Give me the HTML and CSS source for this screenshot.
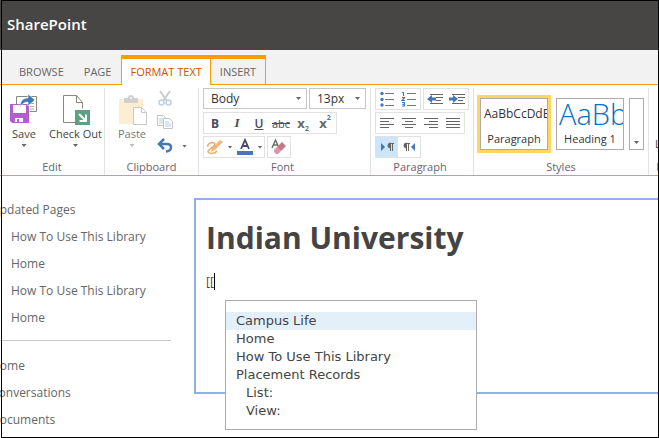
FILE: index.html
```html
<!DOCTYPE html>
<html lang="en">
<head>
<meta charset="utf-8">
<title>SharePoint</title>
<link rel="stylesheet" href="styles.css">
</head>
<body>
<div class="page">
  <header class="suite">SharePoint</header>
  <nav class="tabs">
    <a class="tab" href="#browse">BROWSE</a>
    <a class="tab" href="#page">PAGE</a>
    <a class="tab active" href="#format">FORMAT TEXT</a>
    <a class="tab related" href="#insert">INSERT</a>
  </nav>
  <div class="ribbon">
    <section class="group edit">
      <div class="tools">
        <button class="big">
          <svg width="30" height="32" viewBox="0 0 30 32"><path d="M7.500 12V2.500h20v15h-7" fill="#fff" stroke="#8a887c"/><path d="M21 9.500h4M21 12.500h4M21 15h4" stroke="#aaa"/><path d="M1 10h19v19H3l-2-2z" fill="#b25fcd"/><path d="M4 11h13v8H4z" fill="#fff"/><path d="M6 24h8v4H6z" fill="#fff"/><path d="M8 25h2v3H8z" fill="#b25fcd"/><path d="M11 13c0-7 4-9 8-9V0l7 6-7 6V8c-4 0-6 2-8 5z" fill="#3f78b8" stroke="#fff" stroke-width=".6"/></svg>
          <span>Save</span><i class="arrow"></i>
        </button>
        <button class="big">
          <svg width="30" height="32" viewBox="0 0 30 32"><path d="M15 28.500H3.500v-27h13l6 7v6" fill="#fff" stroke="#8a887c"/><path d="M16.500 1.500v7h6" fill="none" stroke="#8a887c"/><path d="M15 16h15v15H15z" fill="#5f9f84"/><path d="M19 20l7 7M26 20.500V27h-6.500" fill="none" stroke="#fff" stroke-width="2"/></svg>
          <span>Check Out</span><i class="arrow"></i>
        </button>
      </div>
      <h2>Edit</h2>
    </section>
    <section class="group clipboard">
      <div class="tools">
        <button class="big faded" disabled>
          <svg width="30" height="32" viewBox="0 0 30 32"><path d="M2 5h24v25H2z" fill="#fbeed3"/><path d="M7 4h4a3 3 0 0 1 6 0h4v5H7z" fill="#d0d0d0"/><circle cx="14" cy="4" r="1" fill="#fff"/><path d="M16.500 13.500h8l5 5v12h-13z" fill="#fff" stroke="#c8c8c8"/><path d="M24.500 13.500v5h5" fill="none" stroke="#c8c8c8"/></svg>
          <span>Paste</span><i class="arrow"></i>
        </button>
        <div class="stack">
          <button aria-label="Cut"><svg width="16" height="16" viewBox="0 0 16 16"><path d="M3 1l7 10M13 1L6 11" stroke="#ccc" stroke-width="2"/><g fill="none" stroke="#bcd0e4" stroke-width="1.500"><circle cx="4.500" cy="12.500" r="2.500"/><circle cx="11.500" cy="12.500" r="2.500"/></g></svg></button>
          <button aria-label="Copy"><svg width="16" height="16" viewBox="0 0 16 16"><g fill="#fff" stroke="#c4c4c4"><path d="M.5 1.500h6l2 2v8h-8z"/><path d="M6.500 4.500h6l3 3v7h-9z"/></g><path d="M2 5h4M2 7h4M2 9h4M8 8h4M8 10h6M8 12h6" stroke="#b9cde2"/></svg></button>
          <span class="undo"><button aria-label="Undo"><svg width="16" height="16" viewBox="0 0 16 16"><path d="M7 1L2 6l5 5" fill="none" stroke="#4478b8" stroke-width="2.500"/><path d="M2 6h8c6 0 5 7-1 7.500" fill="none" stroke="#4478b8" stroke-width="2.500"/></svg></button><button aria-label="Undo list"><i class="arrow"></i></button></span>
        </div>
      </div>
      <h2>Clipboard</h2>
    </section>
    <section class="group font">
      <div class="tools rows">
        <div class="row">
          <span class="combo wide"><select aria-label="Font"><option>Body</option></select><i class="arrow"></i></span>
          <span class="combo"><select aria-label="Font size"><option>13px</option></select><i class="arrow"></i></span>
        </div>
        <div class="row"><div class="box">
          <button class="b">B</button><button class="it">I</button><button class="u">U</button><button class="s">abc</button><button class="b x">x<sub>2</sub></button><button class="b x">x<sup>2</sup></button>
        </div></div>
        <div class="row">
          <div class="box">
            <button class="split" aria-label="Highlight colour"><svg width="18" height="18" viewBox="0 0 18 18"><path d="M2 9c-2-4 7-6 7-3S1 12 2 14s7 2 9-1" fill="none" stroke="#eda961" stroke-width="1.500"/><path d="M5 14l1-4 8-8 3 2-8 8z" fill="#edb97d"/></svg><i class="arrow"></i></button>
            <button class="split" aria-label="Font colour"><svg width="18" height="18" viewBox="0 0 18 18"><path d="M5 11l4-9 4 9M6.500 8h5" fill="none" stroke="#444b63" stroke-width="1.800"/><path d="M1 13h16v4H1z" fill="#4478b8"/></svg><i class="arrow"></i></button>
          </div>
          <div class="box"><button aria-label="Clear format"><svg width="18" height="18" viewBox="0 0 18 18"><path d="M2 10l3.500-8L9 10M3.500 7h4.500" fill="none" stroke="#6a7068" stroke-width="1.500"/><path d="M4 12l3-3 4 4-3 3H6l-2-2z" fill="#d998a8"/><path d="M7 9l5-5 4 4-5 5z" fill="#c97587"/></svg></button></div>
        </div>
      </div>
      <h2>Font</h2>
    </section>
    <section class="group para">
      <div class="tools rows">
        <div class="row">
          <div class="box">
            <button aria-label="Bullets"><svg width="16" height="16" viewBox="0 0 16 16"><g fill="#4478b8"><circle cx="3" cy="2.500" r="1.700"/><circle cx="3" cy="8.500" r="1.700"/><circle cx="3" cy="14" r="1.700"/></g><path d="M6 2.500h9M6 8.500h9M6 14.500h9" stroke="#777"/></svg></button>
            <button aria-label="Numbering"><svg width="16" height="16" viewBox="0 0 16 16"><path d="M1 1.500h1.500V5M1 6.500h2.500L1 9.500h3M1 11.500h2.500v3.500H1M1.500 13.300h2" fill="none" stroke="#4478b8" stroke-width="1.200"/><path d="M6 2.500h9M6 8.500h9M6 14.500h9" stroke="#777"/></svg></button>
          </div>
          <div class="box">
            <button aria-label="Outdent"><svg width="16" height="16" viewBox="0 0 16 16"><path d="M3 3.500h13M9 6.500h7M9 9.500h5M3 12.500h13" stroke="#666"/><path d="M0 8l5-4v2.500h4v3H5V12z" fill="#4478b8"/></svg></button>
            <button aria-label="Indent"><svg width="16" height="16" viewBox="0 0 16 16"><path d="M3 3.500h13M9 6.500h7M9 9.500h5M3 12.500h13" stroke="#666"/><path d="M9 8L4 4v2.500H0v3h4V12z" fill="#4478b8"/></svg></button>
          </div>
        </div>
        <div class="row"><div class="box">
          <button aria-label="Align left"><svg width="14" height="16" viewBox="0 0 14 16"><path d="M0 3.500h14M0 6.500h9M0 9.500h14M0 12.500h9" stroke="#666"/></svg></button>
          <button aria-label="Centre"><svg width="14" height="16" viewBox="0 0 14 16"><path d="M0 3.500h14M3 6.500h8M0 9.500h14M3 12.500h8" stroke="#666"/></svg></button>
          <button aria-label="Align right"><svg width="14" height="16" viewBox="0 0 14 16"><path d="M0 3.500h14M5 6.500h9M0 9.500h14M5 12.500h9" stroke="#666"/></svg></button>
          <button aria-label="Justify"><svg width="14" height="16" viewBox="0 0 14 16"><path d="M0 3.500h14M0 6.500h14M0 9.500h14M0 12.500h14" stroke="#666"/></svg></button>
        </div></div>
        <div class="row"><div class="box">
          <button class="on" aria-label="Left to right"><svg width="14" height="14" viewBox="0 0 14 14"><path d="M1 3l4 4-4 4z" fill="#4478b8"/><path d="M14 3.500H9M10.500 3v8M12.500 3v8" stroke="#666" fill="none"/><path d="M10.500 3v5a2.500 2.500 0 0 1 0-5z" fill="#666" stroke="#666"/></svg></button>
          <button aria-label="Right to left"><svg width="14" height="14" viewBox="0 0 14 14"><path d="M13 3L9 7l4 4z" fill="#4478b8"/><path d="M8 3.500H3M4.500 3v8M6.500 3v8" stroke="#666" fill="none"/><path d="M4.500 3v5a2.500 2.500 0 0 1 0-5z" fill="#666" stroke="#666"/></svg></button>
        </div></div>
      </div>
      <h2>Paragraph</h2>
    </section>
    <section class="group styles">
      <div class="tools">
        <button class="style chosen"><span class="sample">AaBbCcDdE</span><span>Paragraph</span></button>
        <button class="style"><span class="sample large">AaBb</span><span>Heading 1</span></button>
        <button class="more" aria-label="More styles"><i class="arrow"></i></button>
      </div>
      <h2>Styles</h2>
    </section>
    <section class="group layout">
      <div class="tools"><button>L</button></div>
      <h2>I</h2>
    </section>
  </div>
  <div class="body">
    <nav class="side">
      <a href="#updated">Updated Pages</a>
      <a class="sub" href="#how">How To Use This Library</a>
      <a class="sub" href="#home">Home</a>
      <a class="sub" href="#how">How To Use This Library</a>
      <a class="sub" href="#home">Home</a>
      <hr>
      <a href="#home">Home</a>
      <a href="#conversations">Conversations</a>
      <a href="#documents">Documents</a>
    </nav>
    <main class="editor">
      <h1>Indian University</h1>
      <p>[[<span class="caret"></span></p>
      <ul class="menu">
        <li class="hot">Campus Life</li>
        <li>Home</li>
        <li>How To Use This Library</li>
        <li>Placement Records</li>
        <li class="in">List:</li>
        <li class="in">View:</li>
      </ul>
    </main>
  </div>
</div>
</body>
</html>
```
FILE: styles.css
```css
* { box-sizing: border-box; }
body { margin: 0; font-family: "Open Sans", "Noto Sans", sans-serif; color: #444; background: #fff; }
.page { position: relative; min-height: 100vh; overflow: hidden; }
.page::after { content: ""; position: absolute; inset: 0 0 0 1px; border: 1px solid #000; pointer-events: none; }
button { border: 0; background: none; padding: 0; margin: 0; font: inherit; color: inherit; }
a { color: inherit; text-decoration: none; }
svg { display: block; flex: none; }
.arrow { display: block; width: 5px; height: 3px; background: #666; clip-path: polygon(0 0, 100% 0, 50% 100%); flex: none; }

.suite { height: 50px; padding-left: 7px; background: #484644; color: #fff; font-size: 15px; font-weight: 600; line-height: 48px; }
.tabs { display: flex; align-items: flex-end; height: 35px; padding-left: 9px; background: #f2f2f2; border-bottom: 1px solid #ff9d00; font-size: 11px; color: #666; }
.tab { height: 30px; margin-bottom: -1px; padding: 0 10px; border-top: 4px solid transparent; line-height: 26px; }
.active { background: #fff; border: 1px solid #ff9d00; border-width: 4px 1px 0; padding: 0 8px; color: #c75300; }
.related { height: 29px; margin-bottom: 0; padding: 0 9px; border-top-color: #ff9d00; border-right: 1px solid #ff9d00; }

.ribbon { display: flex; height: 91px; border-bottom: 1px solid #ff9d00; overflow: hidden; font-size: 11px; }
.group { display: flex; flex-direction: column; flex: none; margin-top: 3px; border-right: 1px solid #e1e1e1; }
.group h2 { margin: 0; font-size: 11px; font-weight: 400; line-height: 16px; text-align: center; color: #666; }
.tools { display: flex; height: 71px; }
.edit { width: 105px; }
.edit .tools { padding-left: 9px; gap: 10px; }
.clipboard { width: 94px; }
.clipboard .tools { padding-left: 12px; gap: 10px; }
.font { width: 172px; }
.para { width: 103px; }
.styles { width: 175px; }
.big { display: flex; flex-direction: column; align-items: center; min-width: 30px; padding-top: 6px; line-height: 16px; color: #444; }
.big .arrow { margin-top: 2px; }
.faded { color: #777; }
.faded .arrow { background: #bbb; }
.stack { display: flex; flex-direction: column; gap: 8px; padding-top: 2px; }
.undo { display: flex; align-items: center; gap: 9px; }
.rows { flex-direction: column; gap: 2px; padding-left: 4px; }
.font h2, .para h2 { padding-right: 4px; }
.row { display: flex; gap: 2px; height: 22px; }
.box { display: flex; height: 22px; border: 1px solid #e1e1e1; }
.box button { display: flex; align-items: center; justify-content: center; width: 22px; font-size: 12px; color: #444b63; }
.box .split { width: 30px; gap: 4px; }
.box .on { background: #cde6f7; }
.box .b { font-weight: 700; }
.box .it { font: italic 700 13px "Liberation Serif", serif; }
.box .u { font-weight: 600; text-decoration: underline; }
.box .s { font-size: 11px; text-decoration: line-through; }
.box .x { font-size: 13px; color: #666; }
.x sub, .x sup { font-size: 7px; color: #4478b8; }
.x sub { align-self: flex-end; }
.x sup { align-self: flex-start; }
.combo { display: flex; align-items: center; width: 57px; height: 21px; padding-right: 5px; border: 1px solid #c6c6c6; }
.wide { width: 104px; }
.combo select { flex: 1; min-width: 0; appearance: none; border: 0; padding: 0 0 0 7px; background: none; font: inherit; font-size: 12px; color: #333; }
.styles .tools { padding: 10px 0 0 6px; gap: 5px; }
.style { display: flex; flex-direction: column; justify-content: flex-end; width: 68px; height: 52px; border: 1px solid #ababab; overflow: hidden; line-height: 20px; text-align: center; color: #333; }
.chosen { outline: 3px solid #ffd75e; margin-right: 3px; }
.sample { height: 30px; padding-left: 3px; font-size: 12px; line-height: 30px; text-align: left; white-space: nowrap; }
.large { padding-left: 2px; font-size: 29px; font-weight: 300; color: #0072c6; }
.more { display: flex; align-items: flex-end; justify-content: center; width: 15px; height: 52px; padding-bottom: 5px; border: 1px solid #ababab; }
.layout { padding-left: 6px; border: 0; }
.layout button { padding-top: 40px; }

.body { display: grid; grid-template-columns: 171px 1fr; column-gap: 23px; padding-right: 1px; }
.side { display: flex; flex-direction: column; margin-left: -9px; padding-top: 20px; font-size: 12px; line-height: 27px; color: #666; }
.sub { padding-left: 20px; }
.side hr { width: 100%; margin: 9px 0 11px; border: 0; border-top: 1px solid #c6c6c6; }
.editor { position: relative; height: 196px; margin-top: 22px; padding: 18px 10px; border: 2px solid #8eb1ee; border-right: 0; }
h1 { margin: 0; font-size: 30px; line-height: 40px; font-weight: 700; }
p { display: flex; align-items: center; margin: 15px 0 0; font-size: 12px; line-height: 17px; }
.caret { width: 1px; height: 17px; background: #000; }
.menu { position: absolute; left: 29px; top: 100px; width: 252px; margin: 0; padding: 11px 0 9px; border: 1px solid #ababab; background: #fff; list-style: none; font: 13px/18px "DejaVu Sans", sans-serif; }
.menu li { padding-left: 10px; }
.menu .in { padding-left: 20px; }
.menu .hot { background: #e3f0fa; }
```
